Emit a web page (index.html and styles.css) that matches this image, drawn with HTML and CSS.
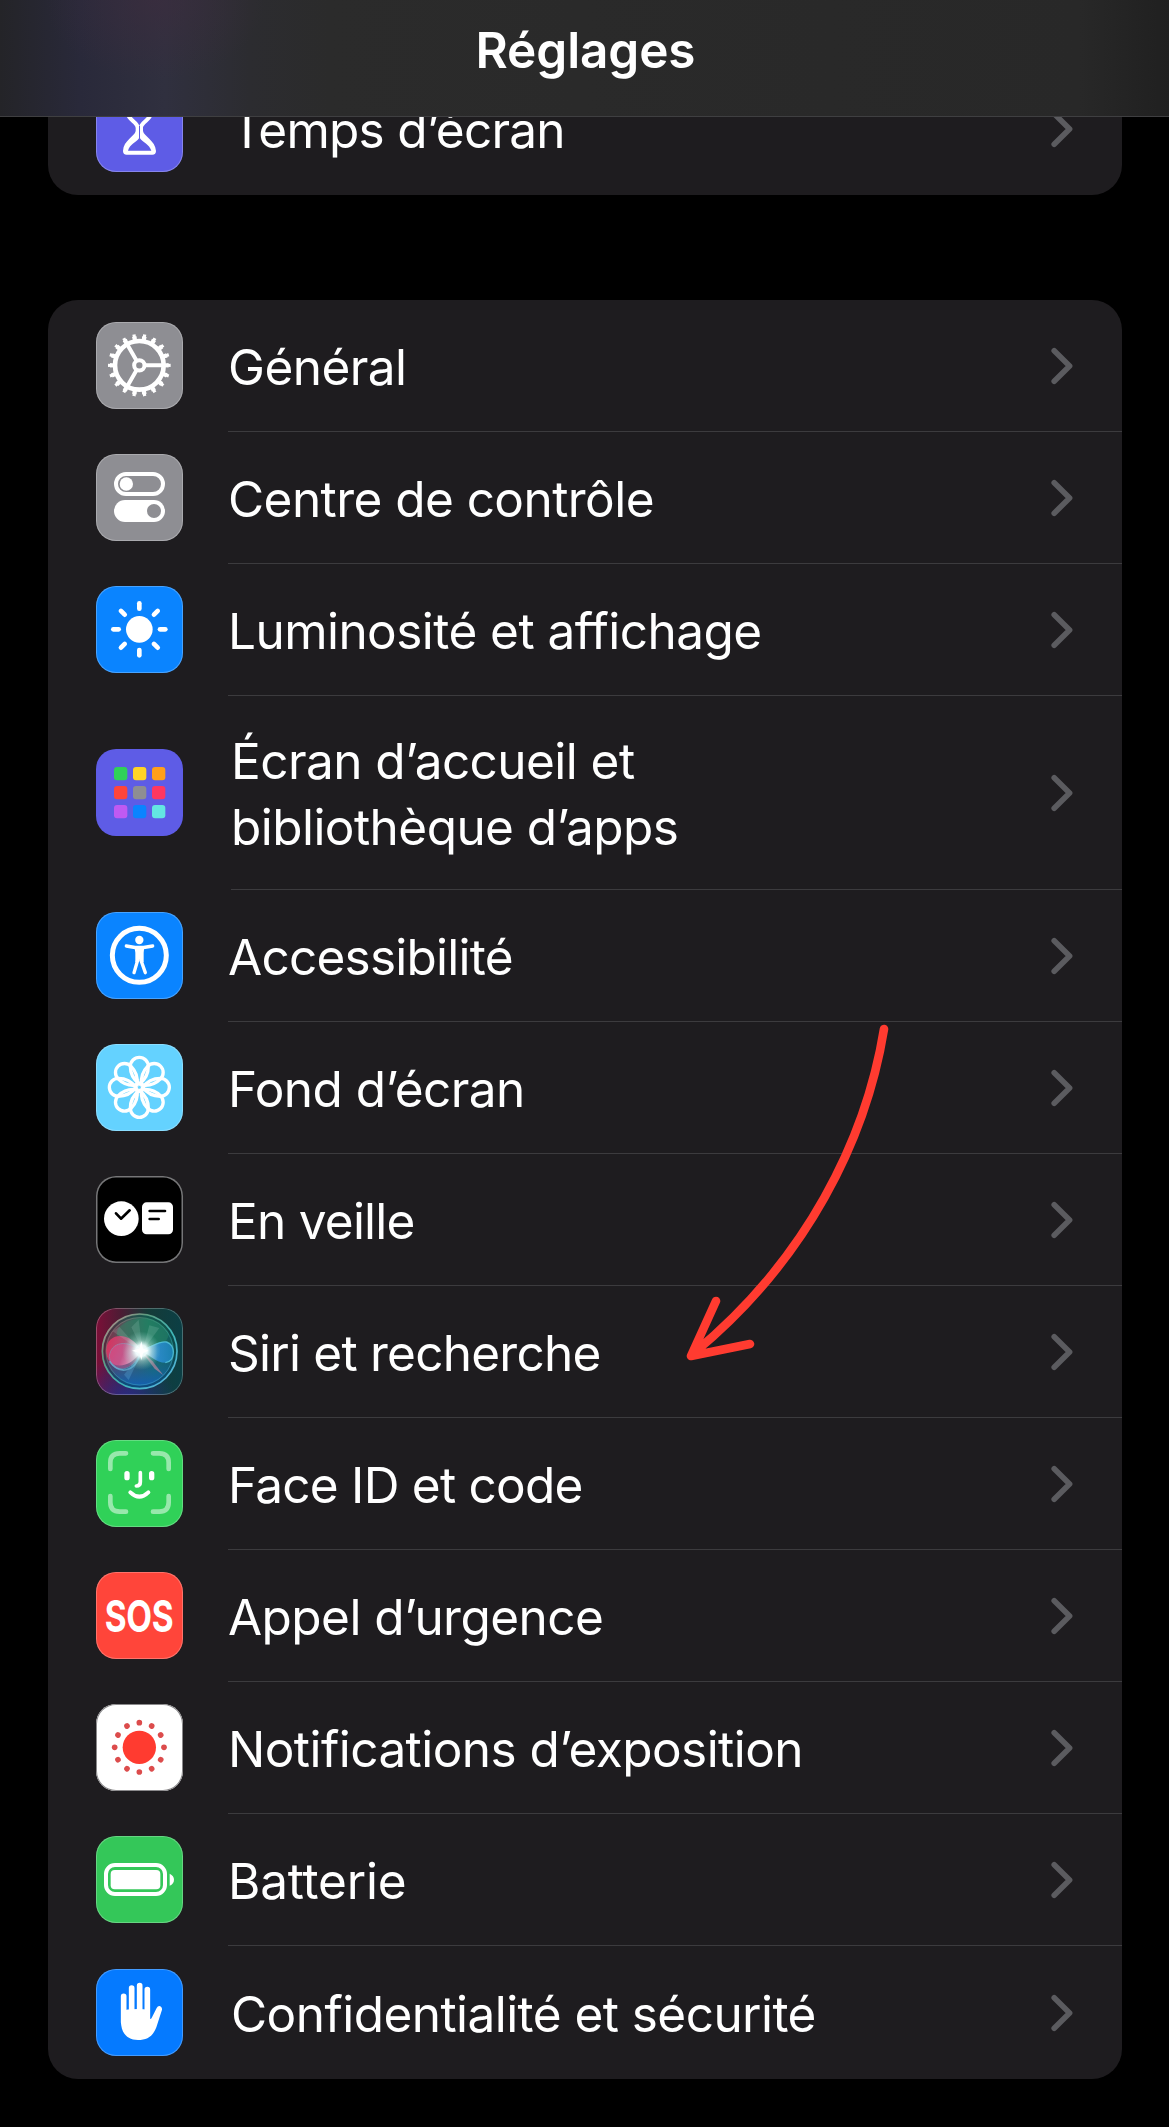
FILE: index.html
```html
<!DOCTYPE html>
<html lang="fr">
<head>
  <meta charset="utf-8">
  <meta name="viewport" content="width=device-width, initial-scale=1.0">
  <title>Réglages</title>
  <link rel="stylesheet" href="styles.css">
</head>
<body>

  <header class="navbar">
    <h1>Réglages</h1>
  </header>

  <!-- shared shapes -->
  <svg class="defs" width="0" height="0">
    <defs>
      <symbol id="chevron" viewBox="0 0 22 38">
        <path d="M3.2 3.8 18.6 19 3.2 34.2" fill="none" stroke="#5b5b5f" stroke-width="5.6" stroke-linecap="round" stroke-linejoin="round"/>
      </symbol>
      <path id="petal" d="M0-10C-22-26-27-46-27-63A27 27 0 0 1 27-63C27-46 22-26 0-10Z"/>
      <path id="ray" d="M0-62V-78"/>
      <circle id="dot" cx="0" cy="-74" r="8.5"/>
    </defs>
  </svg>

  <main>
    <ul class="group">
      <li class="row last indent tight">
        <svg class="icon indigo" viewBox="0 0 261 261">
          <path d="M88 51H172M96 54V88C98 104 124 112 125 127M164 54V88C162 104 136 112 135 127" fill="none" stroke="#fff" stroke-width="12" stroke-linejoin="round"/>
          <path d="M119 124H141V138C143 154 178 166 180 198Q180 209 169 209H92Q81 209 81 198C82 166 117 154 119 138Z" fill="#fff"/>
          <path d="M129 122H132V160C140 172 160 178 166 197H96C101 178 121 172 129 160Z" fill="#5e5ce6"/>
        </svg>
        <span class="label">Temps d’écran</span>
        <svg class="chevron"><use href="#chevron"/></svg>
      </li>
    </ul>

    <ul class="group">
      <li class="row">
        <svg class="icon gray" viewBox="0 0 261 261">
          <g fill="none" stroke="#fff">
            <circle cx="130" cy="130" r="73" stroke-width="14"/>
            <circle cx="130" cy="130" r="82" stroke-width="12" pathLength="360" stroke-dasharray="9 11" stroke-dashoffset="4.5"/>
            <circle cx="130" cy="130" r="89" stroke-width="10" pathLength="360" stroke-dasharray="6 14" stroke-dashoffset="3"/>
            <circle cx="130" cy="130" r="15.5" stroke-width="12"/>
            <path d="M148 130H204M121 114.400 93 66M121 145.600 93 194" stroke-width="12"/>
          </g>
        </svg>
        <span class="label">Général</span>
        <svg class="chevron"><use href="#chevron"/></svg>
      </li>
      <li class="row">
        <svg class="icon gray" viewBox="0 0 261 261">
          <rect x="60" y="60" width="141" height="60" rx="30" fill="none" stroke="#fff" stroke-width="12"/>
          <circle cx="91" cy="90" r="20" fill="#fff"/>
          <rect x="54" y="138" width="153" height="66" rx="33" fill="#fff"/>
          <circle cx="174" cy="171" r="21" fill="#8e8e93"/>
        </svg>
        <span class="label">Centre de contrôle</span>
        <svg class="chevron"><use href="#chevron"/></svg>
      </li>
      <li class="row">
        <svg class="icon blue" viewBox="0 0 261 261">
          <circle cx="130" cy="130" r="40" fill="#fff"/>
          <g transform="translate(130 130)" stroke="#fff" stroke-width="14" stroke-linecap="round">
            <use href="#ray"/>
            <use href="#ray" transform="rotate(45)"/>
            <use href="#ray" transform="rotate(90)"/>
            <use href="#ray" transform="rotate(135)"/>
            <use href="#ray" transform="rotate(180)"/>
            <use href="#ray" transform="rotate(225)"/>
            <use href="#ray" transform="rotate(270)"/>
            <use href="#ray" transform="rotate(315)"/>
          </g>
        </svg>
        <span class="label">Luminosité et affichage</span>
        <svg class="chevron"><use href="#chevron"/></svg>
      </li>
      <li class="row tall indent">
        <svg class="icon indigo flat" viewBox="0 0 261 261">
          <rect x="54" y="54" width="40" height="40" rx="9" fill="#30d158"/>
          <rect x="111" y="54" width="40" height="40" rx="9" fill="#ffd426"/>
          <rect x="168" y="54" width="40" height="40" rx="9" fill="#ff9f1a"/>
          <rect x="54" y="111" width="40" height="40" rx="9" fill="#ff453a"/>
          <rect x="111" y="111" width="40" height="40" rx="9" fill="#8e8e93"/>
          <rect x="168" y="111" width="40" height="40" rx="9" fill="#ff375f"/>
          <rect x="54" y="168" width="40" height="40" rx="9" fill="#bf5af2"/>
          <rect x="111" y="168" width="40" height="40" rx="9" fill="#0a84ff"/>
          <rect x="168" y="168" width="40" height="40" rx="9" fill="#63e6e2"/>
        </svg>
        <span class="label">Écran d’accueil et<br>bibliothèque d’apps</span>
        <svg class="chevron"><use href="#chevron"/></svg>
      </li>
      <li class="row tight">
        <svg class="icon blue" viewBox="0 0 261 261">
          <circle cx="130" cy="130" r="81" fill="none" stroke="#fff" stroke-width="15"/>
          <circle cx="130" cy="84" r="12.500" fill="#fff"/>
          <path d="M91 102 117 106.500H143L170 102M125 145 114 182M135 145 148 182" fill="none" stroke="#fff" stroke-width="10" stroke-linecap="round"/>
          <path d="M115 102H145L143 122V150L134 152 130 142 126 152 118 150V122Z" fill="#fff"/>
        </svg>
        <span class="label">Accessibilité</span>
        <svg class="chevron"><use href="#chevron"/></svg>
      </li>
      <li class="row">
        <svg class="icon cyan" viewBox="0 0 261 261">
          <g transform="translate(130 130)" fill="none" stroke="#fff" stroke-width="10">
            <use href="#petal"/>
            <use href="#petal" transform="rotate(45)"/>
            <use href="#petal" transform="rotate(90)"/>
            <use href="#petal" transform="rotate(135)"/>
            <use href="#petal" transform="rotate(180)"/>
            <use href="#petal" transform="rotate(225)"/>
            <use href="#petal" transform="rotate(270)"/>
            <use href="#petal" transform="rotate(315)"/>
            <circle r="13" stroke-width="8"/>
          </g>
        </svg>
        <span class="label">Fond d’écran</span>
        <svg class="chevron"><use href="#chevron"/></svg>
      </li>
      <li class="row tight">
        <svg class="icon black" viewBox="0 0 261 261">
          <circle cx="76" cy="128" r="52" fill="#fff"/>
          <rect x="138" y="79" width="93" height="96" rx="14" fill="#fff"/>
          <path d="M60 112 75 128 101 103M161 105H207M161 129H188" fill="none" stroke="#000" stroke-width="8" stroke-linecap="round" stroke-linejoin="round"/>
        </svg>
        <span class="label">En veille</span>
        <svg class="chevron"><use href="#chevron"/></svg>
      </li>
      <li class="row tight">
        <svg class="icon siri" viewBox="0 0 261 261">
          <defs>
            <linearGradient id="orb" x1="0" y1=".5" x2="1" y2=".4">
              <stop offset="0" stop-color="#8a2748"/>
              <stop offset=".35" stop-color="#4e5a5c"/>
              <stop offset=".65" stop-color="#1d7460"/>
              <stop offset="1" stop-color="#0f5a5e"/>
            </linearGradient>
            <linearGradient id="orbLow" x1="0" y1="0" x2="0" y2="1">
              <stop offset=".5" stop-color="#0f5c9c" stop-opacity="0"/>
              <stop offset=".95" stop-color="#1560ad"/>
            </linearGradient>
            <linearGradient id="rim" x1="0" y1="0" x2="1" y2="1">
              <stop offset="0" stop-color="#c98a90"/>
              <stop offset=".3" stop-color="#5f9c80"/>
              <stop offset=".6" stop-color="#3fb5b5"/>
              <stop offset="1" stop-color="#5db4e6"/>
            </linearGradient>
            <linearGradient id="pink" x1="0" y1="0" x2="1" y2=".3">
              <stop offset="0" stop-color="#e8305f"/>
              <stop offset=".6" stop-color="#c8507f"/>
              <stop offset="1" stop-color="#fff"/>
            </linearGradient>
            <linearGradient id="azure" x1="0" y1="0" x2="1" y2="0">
              <stop offset="0" stop-color="#fff"/>
              <stop offset=".5" stop-color="#2f8fd8"/>
              <stop offset="1" stop-color="#1c86bd"/>
            </linearGradient>
            <radialGradient id="glow">
              <stop offset="0" stop-color="#fff"/>
              <stop offset=".3" stop-color="#f2ffff" stop-opacity=".95"/>
              <stop offset=".55" stop-color="#c8efe8" stop-opacity=".45"/>
              <stop offset="1" stop-color="#8fd6cf" stop-opacity="0"/>
            </radialGradient>
          </defs>
          <circle cx="131" cy="130" r="112" fill="url(#orb)"/>
          <circle cx="131" cy="130" r="112" fill="url(#orbLow)"/>
          <ellipse cx="140" cy="78" rx="78" ry="46" fill="#2b8a66" opacity=".45"/>
          <path d="M135 128C105 70 35 70 30 125 28 185 100 190 135 128Z" fill="url(#pink)" opacity=".85"/>
          <path d="M135 128C95 95 45 100 40 145 45 205 120 190 135 128Z" fill="#d75c9c" stroke="#7fb4dc" stroke-width="3" opacity=".45"/>
          <path d="M40 160C70 200 115 195 133 138" fill="none" stroke="#6ec7e6" stroke-width="5" opacity=".6"/>
          <path d="M135 128C165 115 190 98 212 102 240 110 240 160 208 164 180 164 160 140 135 128Z" fill="url(#azure)" opacity=".85"/>
          <path d="M135 128C170 118 185 98 212 102 240 110 240 160 208 164" fill="none" stroke="#56c8df" stroke-width="4" opacity=".8"/>
          <path d="M138 132 170 160 202 202 176 182Z" fill="#d58aa4" opacity=".6"/>
          <path d="M138 132 98 216 84 200Z" fill="#5fb0e0" opacity=".3"/>
          <path d="M128 35 140 128 106 58ZM190 60 140 128 160 52ZM50 70 134 128 70 56Z" fill="#bfe8d8" opacity=".16"/>
          <circle cx="136" cy="128" r="58" fill="url(#glow)"/>
          <path d="M136 100 141 122 158 128 141 135 136 156 130 135 108 128 130 122Z" fill="#fff"/>
          <circle cx="131" cy="130" r="106" fill="none" stroke="#06302f" stroke-width="6" opacity=".4"/>
          <circle cx="131" cy="130" r="112" fill="none" stroke="url(#rim)" stroke-width="5"/>
          <circle cx="131" cy="130" r="101" fill="none" stroke="url(#rim)" stroke-width="2" opacity=".6"/>
        </svg>
        <span class="label">Siri et recherche</span>
        <svg class="chevron"><use href="#chevron"/></svg>
      </li>
      <li class="row tight">
        <svg class="icon green" viewBox="0 0 261 261">
          <path d="M43 87V68Q43 40 71 40H90M171 40H190Q218 40 218 68V87M218 168V187Q218 215 190 215H171M90 215H71Q43 215 43 187V168" fill="none" stroke="#fff" stroke-opacity=".5" stroke-width="14" stroke-linecap="round"/>
          <path d="M93 101V113M167 101V113" stroke="#fff" stroke-width="16" stroke-linecap="round"/>
          <path d="M133 98V126Q133 138 121 138" fill="none" stroke="#fff" stroke-width="11" stroke-linecap="round"/>
          <path d="M103 157Q130 183 157 157" fill="none" stroke="#fff" stroke-width="12" stroke-linecap="round"/>
        </svg>
        <span class="label">Face ID et code</span>
        <svg class="chevron"><use href="#chevron"/></svg>
      </li>
      <li class="row">
        <div class="icon red">
          <span class="sos">SOS</span>
        </div>
        <span class="label">Appel d’urgence</span>
        <svg class="chevron"><use href="#chevron"/></svg>
      </li>
      <li class="row">
        <svg class="icon white" viewBox="0 0 261 261">
          <circle cx="130" cy="130" r="50" fill="#ff3b30"/>
          <g transform="translate(130 130)" fill="#dc4c4c">
            <use href="#dot"/>
            <use href="#dot" transform="rotate(30)"/>
            <use href="#dot" transform="rotate(60)"/>
            <use href="#dot" transform="rotate(90)"/>
            <use href="#dot" transform="rotate(120)"/>
            <use href="#dot" transform="rotate(150)"/>
            <use href="#dot" transform="rotate(180)"/>
            <use href="#dot" transform="rotate(210)"/>
            <use href="#dot" transform="rotate(240)"/>
            <use href="#dot" transform="rotate(270)"/>
            <use href="#dot" transform="rotate(300)"/>
            <use href="#dot" transform="rotate(330)"/>
          </g>
        </svg>
        <span class="label">Notifications d’exposition</span>
        <svg class="chevron"><use href="#chevron"/></svg>
      </li>
      <li class="row loose">
        <svg class="icon green battery" viewBox="0 0 261 261">
          <rect x="30" y="87" width="177" height="87" rx="27" fill="none" stroke="#fff" stroke-width="12"/>
          <rect x="44" y="102" width="149" height="58" rx="12" fill="#fff"/>
          <path d="M221 113Q234 119 234 131T221 149Z" fill="#fff"/>
        </svg>
        <span class="label">Batterie</span>
        <svg class="chevron"><use href="#chevron"/></svg>
      </li>
      <li class="row last indent">
        <svg class="icon blue privacy" viewBox="0 0 261 261">
          <path d="M83 82V160M107 57V150M131 50V150M154 62V150" stroke="#fff" stroke-width="17" stroke-linecap="round"/>
          <path d="M75 127Q100 117 162 122V150Q166 151 168 145L182 117Q186 109 193 111.500 199 115 198 122L184 166C174 200 156 213 126 213 92 213 75 190 75 158Z" fill="#fff"/>
        </svg>
        <span class="label">Confidentialité et sécurité</span>
        <svg class="chevron"><use href="#chevron"/></svg>
      </li>
    </ul>
  </main>

  <!-- hand-drawn arrow laid over the list, pointing at Siri -->
  <svg class="arrow" viewBox="0 0 210 345">
    <path d="M204 9C186 120 126 240 15 332M36 281 11 336 70 324" fill="none" stroke="#ff3b30" stroke-width="8.600" stroke-linecap="round" stroke-linejoin="round"/>
  </svg>

</body>
</html>
```
FILE: styles.css
```css
* {
  box-sizing: border-box;
}

body {
  margin: 0;
  min-height: 2127px;
  background: #000;
  color: #fff;
  font-family: Inter, "Liberation Sans", sans-serif;
  position: relative;
}

/* translucent bar covering the top of the scrolled list */
.navbar {
  position: absolute;
  top: 0;
  left: 0;
  z-index: 2;
  width: 100%;
  height: 117px;
  border-bottom: 1px solid #3f3f41;
  background:
    radial-gradient(ellipse 110px 80px at 155px 0, rgba(62, 44, 62, 0.6), transparent),
    linear-gradient(to right, #242428 0, #29293a 80px, #30303f 165px, #2c2c30 250px, #2b2b2b 330px, #282828 1080px, #202020 1169px);
}

.navbar h1 {
  margin: 0;
  padding: 20px 0 0 2px;
  text-align: center;
  font-size: 49.5px;
  font-weight: 600;
  line-height: 60px;
  letter-spacing: -0.1px;
}

.defs {
  position: absolute;
}

main {
  padding: 62px 47px 0 48px;
}

.group {
  margin: 0 0 105px;
  padding: 0;
  list-style: none;
  background: #1e1c1f;
  border-radius: 30px;
}

.group:last-child {
  margin-bottom: 0;
}

.row {
  display: flex;
  align-items: center;
  height: 132px;
  padding: 0 49px 1px 48px;
  background: linear-gradient(#3c3b3e, #3c3b3e) 180px 100% / 100% 1px no-repeat;
}

.row.tall {
  height: 194px;
  background-position-x: 183px;
}

.row.last {
  height: 133px;
  padding-bottom: 0;
  background: none;
}

.icon {
  width: 87px;
  height: 87px;
  border-radius: 20px;
  box-shadow: inset 0 0 0 1px rgba(255, 255, 255, 0.25);
}

.icon.flat {
  box-shadow: none;
}

.gray { background: #8e8e93; }
.blue { background: #0a84ff; }
.privacy { background: #057aff; }
.indigo { background: #5e5ce6; }
.cyan { background: #64d2ff; }
.green { background: #30d158; }
.battery { background: #34c759; }

.red {
  display: flex;
  align-items: center;
  justify-content: center;
  background: #ff453a;
}

.white {
  background: #fff;
  box-shadow: inset 0 0 0 1px #8a898b;
}

.black {
  background: #000;
  box-shadow: inset 0 0 0 1.5px #767678;
}

.siri {
  background:
    radial-gradient(circle at 35% 110%, rgba(35, 45, 150, 0.9), transparent 45%),
    linear-gradient(to right, #7c0f38 0, #4d1c34 28%, #153b38 60%, #0b3f45 100%);
}

.sos {
  font-size: 44px;
  font-weight: 700;
  line-height: 44px;
  letter-spacing: -0.5px;
  transform: scaleX(0.76);
}

.label {
  flex: 1;
  margin-left: 45px;
  padding-top: 3px;
  font-size: 49.5px;
  line-height: 66px;
  letter-spacing: -0.55px;
}

.indent .label {
  margin-left: 48px;
}

.last .label {
  padding-top: 2px;
}

.tight .label {
  letter-spacing: -0.75px;
}

.loose .label {
  letter-spacing: -0.2px;
}

.chevron {
  width: 22px;
  height: 38px;
}

/* annotation */
.arrow {
  position: absolute;
  left: 680px;
  top: 1020px;
  width: 210px;
  height: 345px;
}
```
